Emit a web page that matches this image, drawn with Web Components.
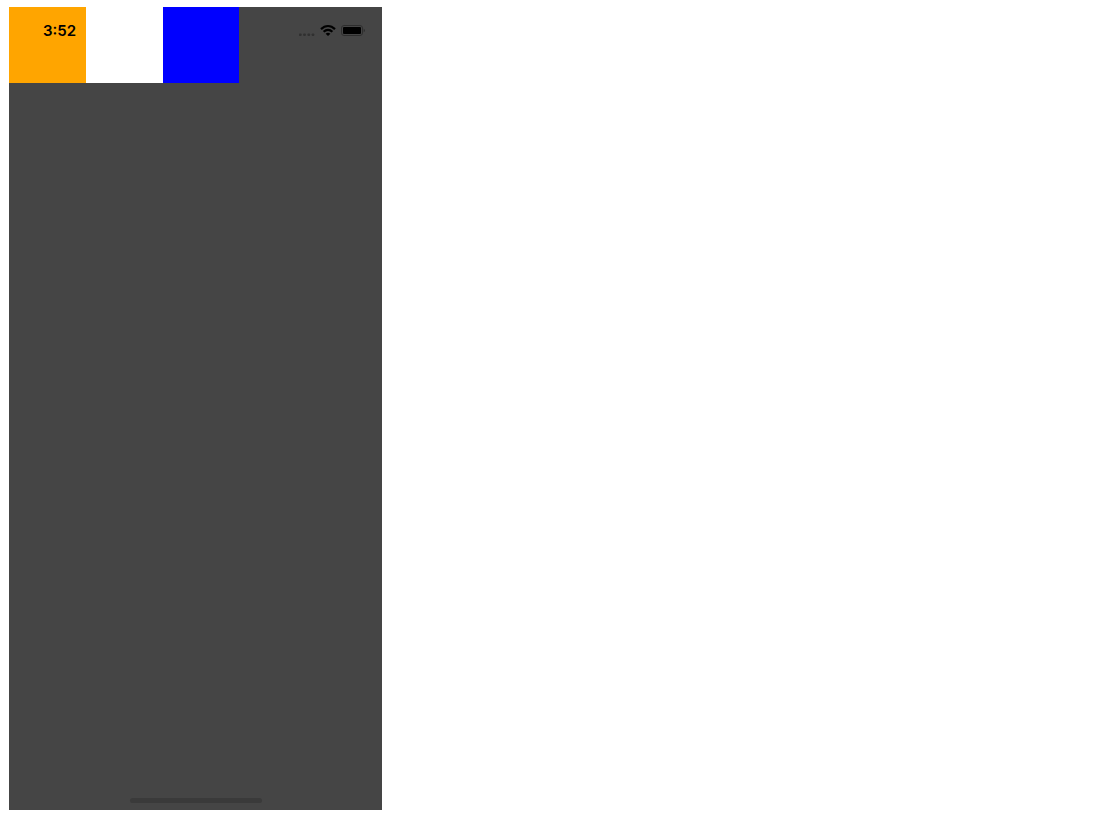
<!DOCTYPE html>
<html lang="en">
<head>
<meta charset="utf-8">
<meta name="viewport" content="width=device-width, initial-scale=1">
<title>Flex boxes</title>
<style>
  body { margin: 0; padding: 7px 9px 11px; background: #fff; font-family: Inter, "Liberation Sans", sans-serif; }
</style>
</head>
<body>
<phone-screen>
  <status-bar slot="status" time="3:52"></status-bar>
  <color-box style="--fill: orange"></color-box>
  <color-box style="--fill: white"></color-box>
  <color-box style="--fill: blue"></color-box>
</phone-screen>

<script>
class PhoneScreen extends HTMLElement {
  constructor() {
    super();
    this.attachShadow({ mode: "open" }).innerHTML = `
      <style>
        :host {
          display: flex; flex-direction: column; position: relative;
          max-width: 373px; min-height: calc(100vh - 18px);
          background: #454545; color: #000;
        }
        main { display: flex; flex: 1; align-items: flex-start; }
        slot[name="status"] { display: block; position: absolute; inset: 0 0 auto; }
        .home {
          position: absolute; bottom: 7px; left: 0; right: 0; margin: auto;
          width: 132px; height: 5px; border-radius: 3px; background: #3a3a3a;
        }
      </style>
      <slot name="status"></slot>
      <main><slot></slot></main>
      <div class="home"></div>`;
  }
}

class ColorBox extends HTMLElement {
  constructor() {
    super();
    this.attachShadow({ mode: "open" }).innerHTML = `
      <style>:host { display: block; width: 77px; height: 76px; background: var(--fill); } :host(:last-of-type) { width: 76px; }</style>`;
  }
}

class StatusBar extends HTMLElement {
  connectedCallback() {
    if (this.shadowRoot) return;
    this.attachShadow({ mode: "open" }).innerHTML = `
      <style>
        :host {
          display: flex; align-items: center; justify-content: space-between;
          height: 47px; padding: 0 17px 0 34px;
        }
        time { font-size: 15px; line-height: 20px; font-weight: 600; }
        .icons { display: flex; gap: 5px; }
        svg { display: block; }
      </style>
      <time></time>
      <div class="icons">
        <svg width="17" height="13" viewBox="0 0 17 13" fill="#303030" aria-hidden="true">
          <rect x="1" y="9.5" width="2.6" height="2.6" rx=".8"/>
          <rect x="5.2" y="9.5" width="2.6" height="2.6" rx=".8"/>
          <rect x="9.5" y="9.5" width="2.6" height="2.6" rx=".8"/>
          <rect x="13.7" y="9.5" width="2.6" height="2.6" rx=".8"/>
        </svg>
        <svg width="16" height="13" viewBox="0 0 16 13" aria-hidden="true">
          <g fill="none" stroke="#000" stroke-width="2.2">
            <path d="M1 5.1Q4.2 2 8 2T15 5.1"/>
            <path d="M3.6 7.8Q5.6 5.9 8 5.9T12.4 7.8"/>
          </g>
          <path d="M5.6 9.7Q8 7.9 10.4 9.7L8 12.1Z"/>
        </svg>
        <svg width="24" height="13" viewBox="0 0 24 13" aria-hidden="true">
          <rect x=".5" y="1.5" width="21" height="10" rx="2.6" fill="none" stroke="#2d2d2d"/>
          <rect x="2" y="3" width="18" height="7" rx="1"/>
          <path d="M22.7 4.8Q24 5.3 24 6.5T22.7 8.2Z" fill="#2d2d2d"/>
        </svg>
      </div>`;
    this.shadowRoot.querySelector("time").textContent = this.getAttribute("time");
  }
}

customElements.define("phone-screen", PhoneScreen);
customElements.define("color-box", ColorBox);
customElements.define("status-bar", StatusBar);
</script>
</body>
</html>
